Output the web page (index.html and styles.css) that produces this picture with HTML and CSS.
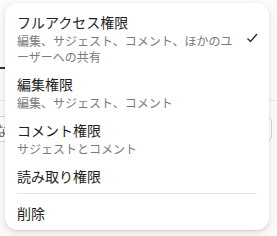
FILE: index.html
```html
<!DOCTYPE html>
<html lang="ja">
<head>
<meta charset="utf-8">
<link rel="stylesheet" href="styles.css">
</head>
<body>
<div class="page">
  <div class="tab-line"></div>
  <div class="rule"></div>
  <div class="field"><span class="field-text">な</span></div>

  <div class="menu">
    <div class="item">
      <div class="text">
        <div class="title">フルアクセス権限</div>
        <div class="sub">編集、サジェスト、コメント、ほかのユーザーへの共有</div>
      </div>
      <svg class="check" width="16" height="12" viewBox="0 0 16 12"><path d="M4.5 6.5 L7.5 9.5 L14 2" fill="none" stroke="#2a2a2a" stroke-width="1.3"/></svg>
    </div>
    <div class="item">
      <div class="text">
        <div class="title">編集権限</div>
        <div class="sub">編集、サジェスト、コメント</div>
      </div>
    </div>
    <div class="item">
      <div class="text">
        <div class="title">コメント権限</div>
        <div class="sub">サジェストとコメント</div>
      </div>
    </div>
    <div class="item">
      <div class="text">
        <div class="title">読み取り権限</div>
      </div>
    </div>
    <div class="divider"></div>
    <div class="item">
      <div class="text">
        <div class="title">削除</div>
      </div>
    </div>
  </div>
</div>
</body>
</html>
```

FILE: styles.css
```css
html, body {
  margin: 0;
  padding: 0;
}
body {
  background: #ffffff;
  font-family: "Noto Sans CJK JP", "Noto Sans", sans-serif;
  width: 277px;
  height: 236px;
  overflow: hidden;
}
.page {
  position: relative;
  width: 277px;
  height: 236px;
  background: #fbfbfb;
}
.tab-line {
  position: absolute;
  left: 0;
  top: 67px;
  width: 8px;
  height: 2px;
  background: #333;
}
.rule {
  position: absolute;
  left: 0;
  top: 100px;
  width: 277px;
  height: 1px;
  background: #e8e8e8;
}
.field {
  position: absolute;
  left: -40px;
  top: 116px;
  width: 310px;
  height: 24px;
  border: 1px solid #d6d6d6;
  border-radius: 6px;
  background: #fff;
}
.field-text {
  position: absolute;
  left: 34px;
  top: 3px;
  font-size: 13px;
  color: #666;
}
.menu {
  position: absolute;
  left: 5px;
  top: 3px;
  width: 264px;
  box-sizing: border-box;
  padding: 4px 0 2px;
  background: #fff;
  border-radius: 12px;
  box-shadow: 0 1px 2px rgba(0,0,0,0.10), 0 3px 10px rgba(0,0,0,0.10);
}
.item {
  display: grid;
  grid-template-columns: 224px 16px;
  column-gap: 2px;
  align-items: center;
  padding: 4px 10px 4px 12px;
}
.title {
  font-size: 14px;
  line-height: 22px;
  color: #1f1f1f;
}
.sub {
  font-size: 12px;
  line-height: 16px;
  color: #7a7a7a;
}
.check {
  display: block;
}
.divider {
  height: 1px;
  background: #e5e5e5;
  margin: 2px 12px 4px;
}
```
